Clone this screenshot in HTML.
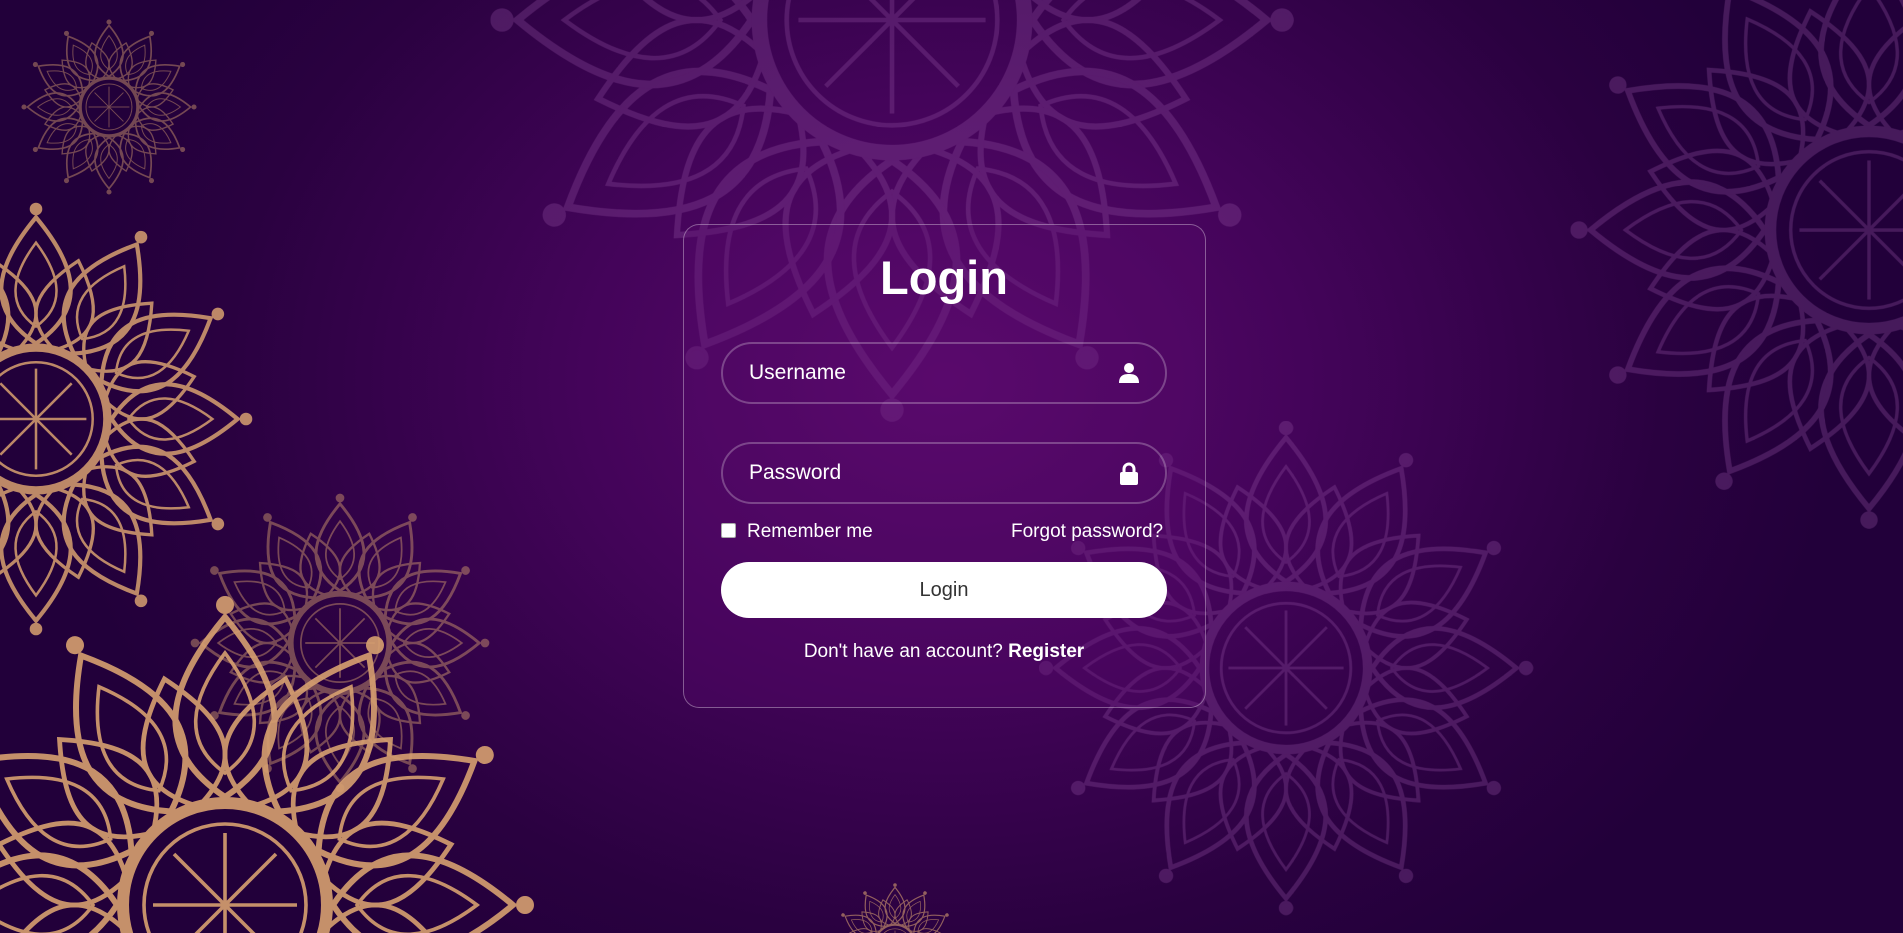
<!DOCTYPE html>
<html><head><meta charset="utf-8">
<style>
html,body{margin:0;padding:0;width:1903px;height:933px;overflow:hidden}
body{background:radial-gradient(ellipse 900px 700px at 945px 380px,#5a0a6c 0%,#44045a 40%,#2a0140 80%,#22003a 100%);font-family:"Liberation Sans",sans-serif;position:relative}
svg.bg{position:absolute;left:0;top:0}
.card{position:absolute;left:683px;top:224px;width:521px;height:482px;border:1.5px solid rgba(255,255,255,0.35);border-radius:16px;background:rgba(90,10,110,0.3)}
h1{position:absolute;left:0;width:1888px;top:248px;margin:0;text-align:center;color:#fff;font-size:47px;font-weight:bold;line-height:60px}
.inp{position:absolute;left:721px;width:442px;height:58px;border:2px solid rgba(255,255,255,0.25);border-radius:31px;color:#fff;font-size:21px;line-height:58px}
.inp span{position:absolute;left:26px}
.inp svg{position:absolute;right:25px;top:18px}
.row{position:absolute;top:519px;color:#fff;font-size:19px;line-height:26px}
.cb{position:absolute;left:721px;top:523px;width:13px;height:13px;background:#fff;border-radius:2px;border:1px solid #aaa}
.btn{position:absolute;left:721px;top:562px;width:446px;height:56px;background:#fff;border-radius:28px;text-align:center;line-height:56px;font-size:20px;color:#333}
.reg{position:absolute;left:0;width:1888px;top:641px;text-align:center;color:#fff;font-size:19px}
</style></head><body>
<svg class="bg" width="1903" height="933" viewBox="0 0 1903 933">
<defs>
<g id="pet"><path d="M0,-96 C20,-72 24,-52 0,-36 C-24,-52 -20,-72 0,-96Z" fill="none" stroke-width="2"/><path d="M0,-84 C12,-68 14,-54 0,-44 C-14,-54 -12,-68 0,-84Z" fill="none" stroke-width="1.2"/><circle cx="0" cy="-100" r="2.5"/></g>
<g id="pet2"><path d="M0,-78 C16,-60 20,-46 0,-34 C-20,-46 -16,-60 0,-78Z" transform="rotate(15)" fill="none" stroke-width="1.6"/></g>
<g id="m">
<use href="#pet"/><use href="#pet" transform="rotate(30)"/><use href="#pet" transform="rotate(60)"/><use href="#pet" transform="rotate(90)"/><use href="#pet" transform="rotate(120)"/><use href="#pet" transform="rotate(150)"/><use href="#pet" transform="rotate(180)"/><use href="#pet" transform="rotate(210)"/><use href="#pet" transform="rotate(240)"/><use href="#pet" transform="rotate(270)"/><use href="#pet" transform="rotate(300)"/><use href="#pet" transform="rotate(330)"/>
<use href="#pet2"/><use href="#pet2" transform="rotate(30)"/><use href="#pet2" transform="rotate(60)"/><use href="#pet2" transform="rotate(90)"/><use href="#pet2" transform="rotate(120)"/><use href="#pet2" transform="rotate(150)"/><use href="#pet2" transform="rotate(180)"/><use href="#pet2" transform="rotate(210)"/><use href="#pet2" transform="rotate(240)"/><use href="#pet2" transform="rotate(270)"/><use href="#pet2" transform="rotate(300)"/><use href="#pet2" transform="rotate(330)"/>
<circle r="34" fill="none" stroke-width="4"/><circle r="27" fill="none" stroke-width="1.2"/>
<path d="M0,-24V24M-24,0H24M-17,-17L17,17M-17,17L17,-17" stroke-width="1.2"/>
</g>
</defs>
<g stroke="#8a4a9a" fill="#8a4a9a" opacity="0.35">
<use href="#m" transform="translate(892,20) scale(3.9)"/>
<use href="#m" transform="translate(1869,230) scale(2.9)"/>
<use href="#m" transform="translate(1286,668) scale(2.4)"/>
</g>
<g stroke="#d7a070" fill="#d7a070">
<use href="#m" transform="translate(36,419) scale(2.1)" opacity="0.85"/>
<use href="#m" transform="translate(340,643) scale(1.45)" opacity="0.45"/>
<use href="#m" transform="translate(225,905) scale(3)" opacity="0.9"/>
<use href="#m" transform="translate(109,107) scale(0.85)" opacity="0.45"/>
<use href="#m" transform="translate(895,945) scale(0.6)" opacity="0.6"/>
</g>
</svg>
<div class="card"></div>
<h1>Login</h1>
<div class="inp" style="top:342px"><span>Username</span>
<svg width="22" height="22" viewBox="0 0 22 22"><circle cx="11" cy="6" r="5" fill="#fff"/><path d="M1,21 C1,14 5,12 11,12 C17,12 21,14 21,21Z" fill="#fff"/></svg></div>
<div class="inp" style="top:442px"><span>Password</span>
<svg width="22" height="24" viewBox="0 0 22 24"><path d="M6,11V7a5,5 0 0 1 10,0v4" fill="none" stroke="#fff" stroke-width="3"/><rect x="2" y="10" width="18" height="13" rx="2" fill="#fff"/></svg></div>
<div class="cb"></div>
<div class="row" style="left:747px">Remember me</div>
<div class="row" style="left:1011px">Forgot password?</div>
<div class="btn">Login</div>
<div class="reg">Don't have an account? <b>Register</b></div>
</body></html>
